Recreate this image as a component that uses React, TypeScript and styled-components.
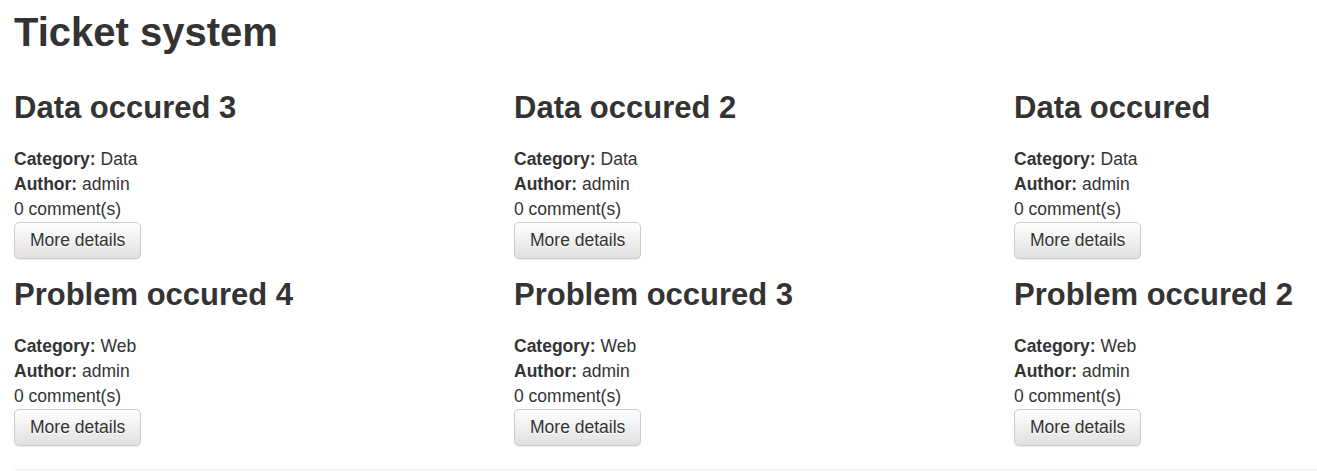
import styled, { createGlobalStyle } from "styled-components";

const GlobalStyle = createGlobalStyle`
  html, body {
    margin: 0;
    padding: 0;
    background: #fff;
  }
  body {
    font-family: "Liberation Sans", Arial, Helvetica, sans-serif;
    color: #333;
    overflow: hidden;
  }
`;

const tickets = [
  { title: "Data occured 3", category: "Data", author: "admin", comments: 0 },
  { title: "Data occured 2", category: "Data", author: "admin", comments: 0 },
  { title: "Data occured", category: "Data", author: "admin", comments: 0 },
  { title: "Problem occured 4", category: "Web", author: "admin", comments: 0 },
  { title: "Problem occured 3", category: "Web", author: "admin", comments: 0 },
  { title: "Problem occured 2", category: "Web", author: "admin", comments: 0 },
];

const App = () => {
  return (
    <>
      <GlobalStyle />
      <Page>
        <Title>Ticket system</Title>
        <TicketGrid>
          {tickets.map((each, index) => (
            <TicketCard key={index}>
              <TicketTitle>{each.title}</TicketTitle>
              <InfoLine>
                <b>Category:</b> {each.category}
              </InfoLine>
              <InfoLine>
                <b>Author:</b> {each.author}
              </InfoLine>
              <InfoLine>{each.comments} comment(s)</InfoLine>
              <DetailsButton type="button">More details</DetailsButton>
            </TicketCard>
          ))}
        </TicketGrid>
        <Divider />
      </Page>
    </>
  );
};

const Page = styled.div`
  display: flex;
  flex-direction: column;
  padding: 10px 0 0 14px;
  width: 1317px;
  box-sizing: border-box;
`;

const Title = styled.h1`
  margin: 0 0 37px;
  font-size: 40px;
  line-height: 44px;
  font-weight: 700;
  color: #333;
`;

const TicketGrid = styled.div`
  display: grid;
  grid-template-columns: 500px 500px 1fr;
  row-gap: 19px;
`;

const TicketCard = styled.div`
  display: flex;
  flex-direction: column;
  align-items: flex-start;
  min-width: 0;
`;

const TicketTitle = styled.h3`
  margin: 0 0 23px;
  font-size: 31px;
  line-height: 33px;
  font-weight: 700;
  color: #333;
  white-space: nowrap;
`;

const InfoLine = styled.div`
  font-size: 17.5px;
  line-height: 25px;
  color: #333;

  b {
    font-weight: 700;
  }
`;

const DetailsButton = styled.button`
  font-family: "Liberation Sans", Arial, Helvetica, sans-serif;
  font-size: 17.5px;
  line-height: 25px;
  color: #333;
  padding: 5px 15px;
  border: 1px solid #ccc;
  border-radius: 5px;
  background-image: linear-gradient(to bottom, #fff 0, #e0e0e0 100%);
  text-shadow: 0 1px 0 #fff;
  box-shadow: inset 0 1px 0 rgba(255, 255, 255, 0.15),
    0 1px 1px rgba(0, 0, 0, 0.075);
  cursor: pointer;
`;

const Divider = styled.hr`
  margin: 23px 0 0;
  border: 0;
  border-top: 1px solid #eee;
  width: 100%;
`;

export default App;
